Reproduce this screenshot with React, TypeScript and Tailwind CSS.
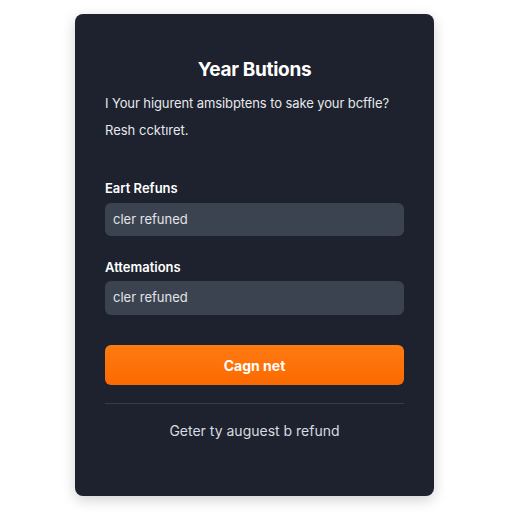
export default function App() {
  const font = { fontFamily: "Inter, 'Noto Sans', sans-serif" };
  return (
    <div className="w-[512px] h-[512px] bg-white flex" style={font}>
      <div className="ml-[75px] mt-[14px] w-[359px] h-[482px] rounded-[8px] bg-[#1d222e] shadow-[0_4px_14px_rgba(0,0,0,0.18)] px-[30px] pt-[44px] flex flex-col">
        <h1 className="text-center text-[19px] leading-[24px] font-bold text-white tracking-[-0.3px]">Year Butions</h1>
        <p className="mt-[12px] whitespace-nowrap text-[13px] leading-[18px] tracking-[-0.1px] text-[#e6e8ec]">I Your higurent amsibptens to sake your bcffle?</p>
        <p className="mt-[9px] text-[13px] leading-[18px] text-[#e6e8ec]">Resh ccktıret.</p>

        <label className="mt-[41px] text-[13px] leading-[16px] font-semibold text-white">Eart Refuns</label>
        <div className="mt-[7px] h-[33px] rounded-[6px] bg-[#3c4350] flex items-center px-[8px] text-[13px] text-[#e2e4e8]">cler refuned</div>

        <label className="mt-[23px] text-[13px] leading-[16px] font-semibold text-white">Attemations</label>
        <div className="mt-[6px] h-[34px] rounded-[6px] bg-[#3c4350] flex items-center px-[8px] text-[13px] text-[#e2e4e8]">cler refuned</div>

        <button className="mt-[30px] h-[40px] rounded-[6px] bg-gradient-to-b from-[#ff7a12] to-[#fb6a00] text-white text-[14px] font-bold">Cagn net</button>

        <div className="mt-[18px] h-px bg-[#363c48]" />

        <p className="mt-[18px] text-center text-[14px] leading-[18px] text-[#d8dbe0]">Geter ty auguest b refund</p>
      </div>
    </div>
  );
}
